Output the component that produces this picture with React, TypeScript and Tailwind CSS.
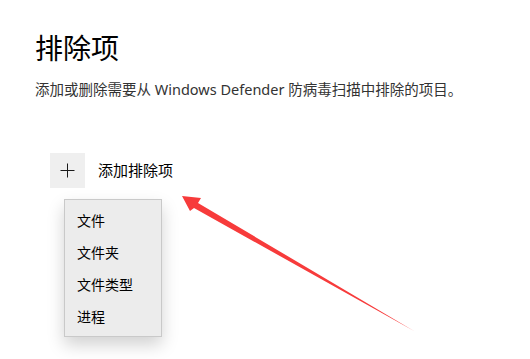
import React from "react";

const menu_items = ["文件", "文件夹", "文件类型", "进程"];

function PlusIcon() {
  return (
    <svg aria-hidden="true" className="w-[15px] h-[15px]" viewBox="0 0 15 15" fill="none" stroke="#1a1a1a" strokeWidth="1">
      <path d="M7.5 0.5v14M0.5 7.5h14" />
    </svg>
  );
}

function Arrow() {
  // red annotation arrow drawn over the page
  return (
    <svg aria-hidden="true" className="absolute inset-0 w-full h-full pointer-events-none" viewBox="0 0 530 359">
      <path d="M182 196 L201 198 L198 203 L414 331 L194 208 L190 211 Z" fill="#f73b3b" />
    </svg>
  );
}

export default function App() {
  return (
    <div
      className="relative w-[530px] h-[359px] bg-white overflow-hidden text-[#1a1a1a]"
      style={{ fontFamily: '"Noto Sans", "Noto Sans CJK SC", sans-serif' }}
    >
      <div className="pl-[35px] pt-[30px]">
        <h1 className="text-[28px] leading-[36px] font-normal text-black">排除项</h1>
        <p className="mt-[13px] text-[14.5px] leading-[20px] text-[#333]">
          添加或删除需要从 Windows Defender 防病毒扫描中排除的项目。
        </p>

        <div className="mt-[54px] ml-[15px] flex items-center gap-[13px]">
          <div className="w-[35px] h-[35px] bg-[#efefef] flex items-center justify-center">
            <PlusIcon />
          </div>
          <span className="text-[15px] text-black">添加排除项</span>
        </div>

        <div className="mt-[11px] ml-[29px] w-[98px] bg-[#ececec] border border-[#c9c9c9] shadow-[0_8px_16px_rgba(0,0,0,0.18)] pt-[4px] pb-[4px]">
          {menu_items.map((item) => (
            <div key={item} className="h-[32px] pl-[12px] flex items-center text-[14px] text-black">
              {item}
            </div>
          ))}
        </div>
      </div>
      <Arrow />
    </div>
  );
}
